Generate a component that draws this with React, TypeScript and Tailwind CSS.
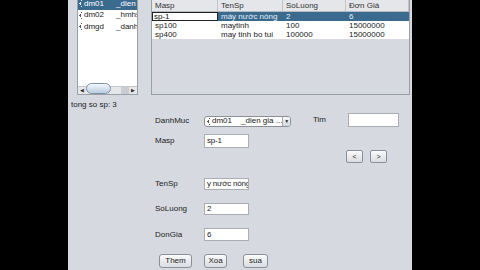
import type { ReactNode } from "react";

const FONT = { fontFamily: '"Liberation Sans", Arial, sans-serif' };

const columns = [
  { key: "masp", label: "Masp", width: 66 },
  { key: "tensp", label: "TenSp", width: 65 },
  { key: "soluong", label: "SoLuong", width: 63 },
  { key: "dongia", label: "Đơn Giá", width: 63 },
] as const;

const rows = [
  { masp: "sp-1", tensp: "máy nước nóng", soluong: "2", dongia: "6" },
  { masp: "sp100", tensp: "maytinh", soluong: "100", dongia: "15000000" },
  { masp: "sp400", tensp: "may tinh bo tui", soluong: "100000", dongia: "15000000" },
];

const categories = [
  { id: "dm01", name: "_dien gia dung" },
  { id: "dm02", name: "_hmhs" },
  { id: "dmgd", name: "_danh muc" },
];

/** Tiny dotted tree-leaf glyph used in front of each category. */
const LeafIcon = ({ light = false }: { light?: boolean }) => (
  <svg width="4" height="7" viewBox="0 0 4 7" className="shrink-0">
    <g fill={light ? "#e8eef5" : "#555"}>
      <rect x="2" y="0" width="1" height="1" />
      <rect x="1" y="2" width="1" height="1" />
      <rect x="0" y="3" width="2" height="1" />
      <rect x="1" y="4" width="1" height="1" />
      <rect x="2" y="6" width="1" height="1" />
    </g>
  </svg>
);

const Field = ({ value, w = "w-[45px]", h = "h-[13px]" }: { value?: string; w?: string; h?: string }) => (
  <div className={`${w} ${h} bg-white border border-[#a9adb4] flex items-center pl-[2px] overflow-hidden whitespace-nowrap text-[8px] leading-none tracking-[-0.2px] text-[#222]`}>
    {value}
  </div>
);

const Button = ({ children, w }: { children: ReactNode; w: string }) => (
  <div className={`${w} h-[14px] rounded-[3px] border border-[#8b9098] bg-gradient-to-b from-[#fbfbfc] to-[#d9dce1] flex items-center justify-center text-[8px] leading-none text-[#222]`}>
    {children}
  </div>
);

const Row = ({ label, children, mt }: { label: string; children: ReactNode; mt: string }) => (
  <div className={`flex items-center ${mt}`}>
    <div className="w-[49px] text-[8px] text-[#222]">{label}</div>
    {children}
  </div>
);

export default function App() {
  return (
    <div className="w-[480px] h-[270px] bg-black flex overflow-hidden" style={FONT}>
      <div className="ml-[68px] w-[344px] h-full bg-[#d6d9e0] flex flex-col">
        {/* top: category list + product table */}
        <div className="flex h-[95px]">
          <div className="ml-[9px] w-[61px] h-[95px] bg-white border-x border-b border-[#9aa0a8] flex flex-col">
            <div className="flex-1 overflow-hidden">
              {categories.map((c, i) => (
                <div
                  key={c.id}
                  className={`h-[11.5px] flex items-center gap-[1px] pl-[1px] whitespace-nowrap text-[8px] leading-none ${
                    i === 0 ? "bg-[#3b6a8f] text-white -mt-[2px]" : "text-[#222]"
                  }`}
                >
                  <LeafIcon light={i === 0} />
                  <span className="w-[31px] shrink-0">{c.id}</span>
                  <span className="shrink-0">{c.name}</span>
                </div>
              ))}
            </div>
            <div className="h-[8px] bg-[#e6e7ea] border-t border-[#c4c7cc] flex items-center relative">
              <span className="w-[8px] text-[5px] text-[#333] text-center leading-none">◀</span>
              <div className="absolute left-[8px] -top-[4px] w-[25px] h-[11px] rounded-full border border-[#7d93a8] bg-gradient-to-b from-[#f4f8fb] to-[#b8cddd]" />
              <div className="flex-1" />
              <div className="w-[8px] h-full bg-[#c9ccd1]" />
              <span className="w-[8px] text-[5px] text-[#333] text-center leading-none">▶</span>
            </div>
          </div>

          <div className="ml-[13px] w-[259px] h-[95px] border-x border-b border-[#9aa0a8] bg-[#d6d9e0]">
            <div className="flex h-[12px] bg-[#e4e6ea] border-b border-[#b5b9c0]">
              {columns.map((col) => (
                <div
                  key={col.key}
                  className="border-r border-[#c0c3c9] flex items-center pl-[3px] text-[8px] leading-none text-[#333]"
                  style={{ width: col.width }}
                >
                  {col.label}
                </div>
              ))}
            </div>
            <div className="bg-white">
              {rows.map((r, i) => (
                <div key={r.masp} className={`flex h-[9px] ${i === 0 ? "bg-[#3b6a8f]" : ""}`}>
                  {columns.map((col) => {
                    const editing = i === 0 && col.key === "masp";
                    return (
                      <div
                        key={col.key}
                        className={`flex items-center whitespace-nowrap overflow-hidden text-[8px] leading-none ${
                          editing
                            ? "bg-white border border-[#222] pl-[1px] text-[#111]"
                            : i === 0
                              ? "pl-[3px] text-[#e6f0fa]"
                              : "pl-[3px] text-[#222]"
                        }`}
                        style={{ width: col.width }}
                      >
                        {r[col.key]}
                      </div>
                    );
                  })}
                </div>
              ))}
            </div>
          </div>
        </div>

        <div className="mt-[4px] ml-[3px] text-[8px] text-[#222]">tong so sp: 3</div>

        {/* form */}
        <div className="flex mt-[2px]">
          <div className="ml-[87px] w-[158px] flex flex-col">
            <Row label="DanhMuc" mt="mt-[2px]">
              <div className="w-[87px] h-[11px] rounded-[3px] border border-[#8b9098] bg-white flex items-center text-[8px] leading-none text-[#222] whitespace-nowrap overflow-hidden">
                <span className="pl-[2px] flex items-center gap-[1px]">
                  <LeafIcon />
                  <span className="w-[28px]">dm01</span>
                  <span>_dien gia ...</span>
                </span>
                <div className="flex-1" />
                <div className="w-[8px] h-full border-l border-[#a9adb4] bg-gradient-to-b from-[#f6f7f9] to-[#d3d7dd] flex items-center justify-center text-[5px] text-[#222]">
                  ▼
                </div>
              </div>
            </Row>
            <Row label="Masp" mt="mt-[7px]">
              <Field value="sp-1" h="h-[14px]" />
            </Row>
            <Row label="TenSp" mt="mt-[30px]">
              <Field value="y nước nóng" h="h-[12px]" />
            </Row>
            <Row label="SoLuong" mt="mt-[13px]">
              <Field value="2" h="h-[12px]" />
            </Row>
            <Row label="DonGia" mt="mt-[13px]">
              <Field value="6" h="h-[13px]" />
            </Row>
            <div className="flex mt-[13px] ml-[4px]">
              <Button w="w-[33px]">Them</Button>
              <div className="ml-[12px]">
                <Button w="w-[23px]">Xoa</Button>
              </div>
              <div className="ml-[16px]">
                <Button w="w-[25px]">sua</Button>
              </div>
            </div>
          </div>

          <div className="flex flex-col">
            <div className="flex items-center">
              <div className="w-[35px] text-[8px] text-[#222]">Tim</div>
              <Field w="w-[51px]" h="h-[14px]" />
            </div>
            <div className="flex mt-[23px] ml-[33px] gap-[7px]">
              <div className="w-[17px] h-[13px] rounded-[2px] border border-[#8b9098] bg-gradient-to-b from-[#fbfbfc] to-[#d9dce1] flex items-center justify-center text-[7px] leading-none text-[#222]">&lt;</div>
              <div className="w-[17px] h-[13px] rounded-[2px] border border-[#8b9098] bg-gradient-to-b from-[#fbfbfc] to-[#d9dce1] flex items-center justify-center text-[7px] leading-none text-[#222]">&gt;</div>
            </div>
          </div>
        </div>
      </div>
    </div>
  );
}
